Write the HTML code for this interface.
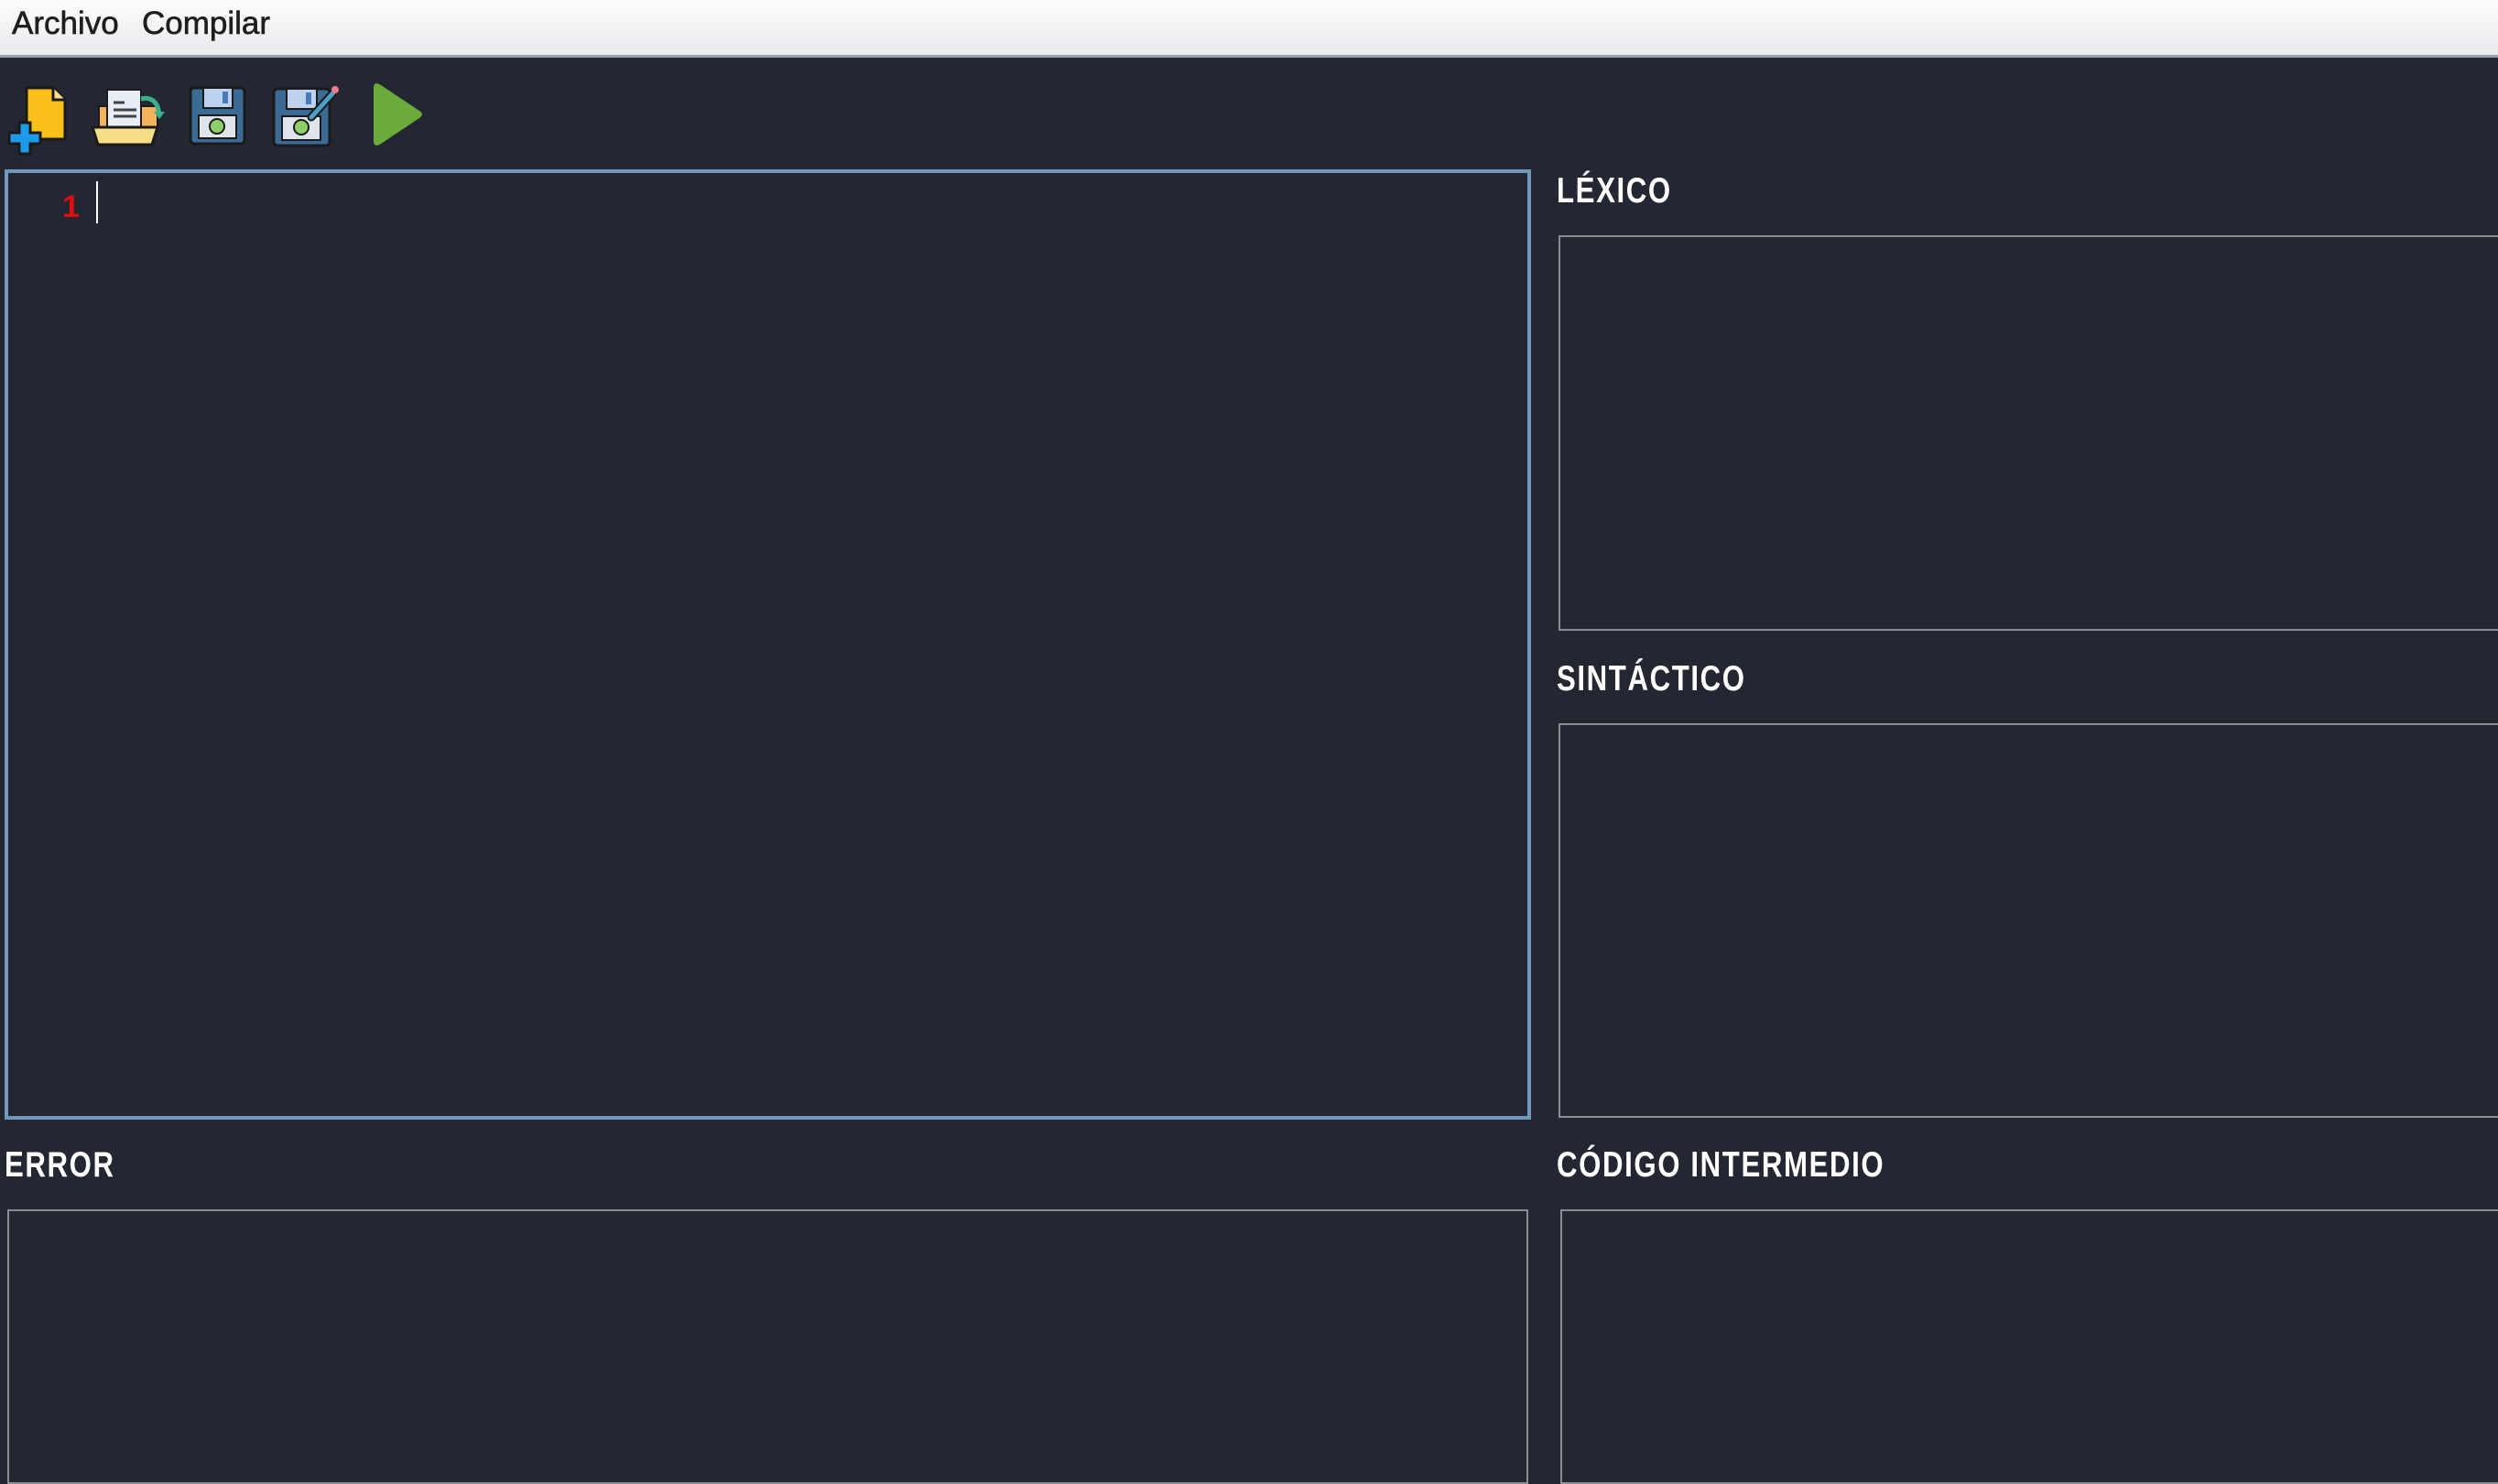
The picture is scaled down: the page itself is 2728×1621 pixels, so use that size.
<!DOCTYPE html>
<html><head><meta charset="utf-8"><style>
*{margin:0;padding:0;box-sizing:border-box}
body{width:2728px;height:1546px;overflow:hidden;background:#242631;font-family:"Liberation Sans",sans-serif;position:relative}
.menu{position:absolute;left:0;top:0;width:2728px;height:63px;background:linear-gradient(#fdfdfd,#e8e9ec);border-bottom:3px solid #9a9ca3}
.menu span{position:absolute;top:6px;font-size:35px;color:#1e1e1e;-webkit-text-stroke:0.6px #1e1e1e}
.lbl{position:absolute;color:#fff;font-weight:bold;font-size:39px;transform-origin:left top;transform:scaleX(0.8);letter-spacing:2px;line-height:1}
.box{position:absolute;border:2px solid #8b8d95}
.ed{position:absolute;left:5px;top:185px;width:1667px;height:1038px;border:4px solid #7397bd}
</style></head><body>
<div class="menu"><span style="left:13px">Archivo</span><span style="left:155px">Compilar</span></div>
<svg style="position:absolute;left:0;top:0" width="500" height="180">
 <path d="M29 96h29l13 13v43h-42z" fill="#fbbf1a" stroke="#1a1a1a" stroke-width="3"/>
 <path d="M58 96v13h13" fill="#ffe08a" stroke="#1a1a1a" stroke-width="3"/>
 <path d="M21 134h12v11h11v12h-11v11h-12v-11h-11v-12h11z" fill="#1e9be8" stroke="#1a1a1a" stroke-width="3"/>
 <rect x="108" y="116" width="64" height="24" fill="#f2b35a" stroke="#1a1a1a" stroke-width="2"/>
 <path d="M117 98h37v43h-37z" fill="#e8eef5" stroke="#1a1a1a" stroke-width="2"/>
 <path d="M124 112h12M124 120h25M124 127h25" stroke="#444" stroke-width="3"/>
 <path d="M154 108q18 -4 20 18" fill="none" stroke="#3ab08a" stroke-width="5"/>
 <path d="M168 122l6 8 6-8z" fill="#3ab08a"/>
 <path d="M101 139h71l-6 19h-59z" fill="#f8de86" stroke="#1a1a1a" stroke-width="3"/>
 <rect x="208" y="96" width="59" height="61" rx="4" fill="#3b6a94" stroke="#1a1a1a" stroke-width="3"/>
 <rect x="222" y="96" width="32" height="22" fill="#bcd2ee" stroke="#1a1a1a" stroke-width="2"/>
 <rect x="243" y="100" width="6" height="13" fill="#4a7ab8"/>
 <rect x="217" y="126" width="41" height="25" fill="#dfe4ea" stroke="#1a1a1a" stroke-width="2"/>
 <circle cx="237" cy="138" r="8" fill="#8fcf6a" stroke="#1a1a1a" stroke-width="2"/>
 <rect x="299" y="97" width="61" height="62" rx="4" fill="#3b6a94" stroke="#1a1a1a" stroke-width="3"/>
 <rect x="313" y="97" width="33" height="22" fill="#bcd2ee" stroke="#1a1a1a" stroke-width="2"/>
 <rect x="334" y="101" width="6" height="13" fill="#4a7ab8"/>
 <rect x="308" y="127" width="42" height="26" fill="#dfe4ea" stroke="#1a1a1a" stroke-width="2"/>
 <circle cx="329" cy="139" r="8" fill="#8fcf6a" stroke="#1a1a1a" stroke-width="2"/>
 <path d="M340 128l26-29" stroke="#1a1a1a" stroke-width="9" stroke-linecap="round"/>
 <path d="M340 128l26-29" stroke="#4aa0c8" stroke-width="5" stroke-linecap="round"/>
 <circle cx="366" cy="98" r="4" fill="#f07a8a"/>
 <path d="M408 96q0-8 8-3l42 28q6 4 0 8l-42 28q-8 5-8-3z" fill="#6aab3a"/>
</svg>
<div class="ed"></div>
<div style="position:absolute;left:68px;top:207px;color:#e01010;font-size:34px;font-weight:bold">1</div>
<div style="position:absolute;left:105px;top:198px;width:2px;height:46px;background:#fff"></div>
<div class="lbl" style="left:1700px;top:189px">LÉXICO</div>
<div class="box" style="left:1702px;top:257px;width:1100px;height:432px"></div>
<div class="lbl" style="left:1700px;top:722px">SINTÁCTICO</div>
<div class="box" style="left:1702px;top:790px;width:1100px;height:431px"></div>
<div class="lbl" style="left:5px;top:1253px">ERROR</div>
<div class="box" style="left:8px;top:1321px;width:1661px;height:300px"></div>
<div class="lbl" style="left:1700px;top:1253px">CÓDIGO INTERMEDIO</div>
<div class="box" style="left:1704px;top:1321px;width:1100px;height:300px"></div>
</body></html>
